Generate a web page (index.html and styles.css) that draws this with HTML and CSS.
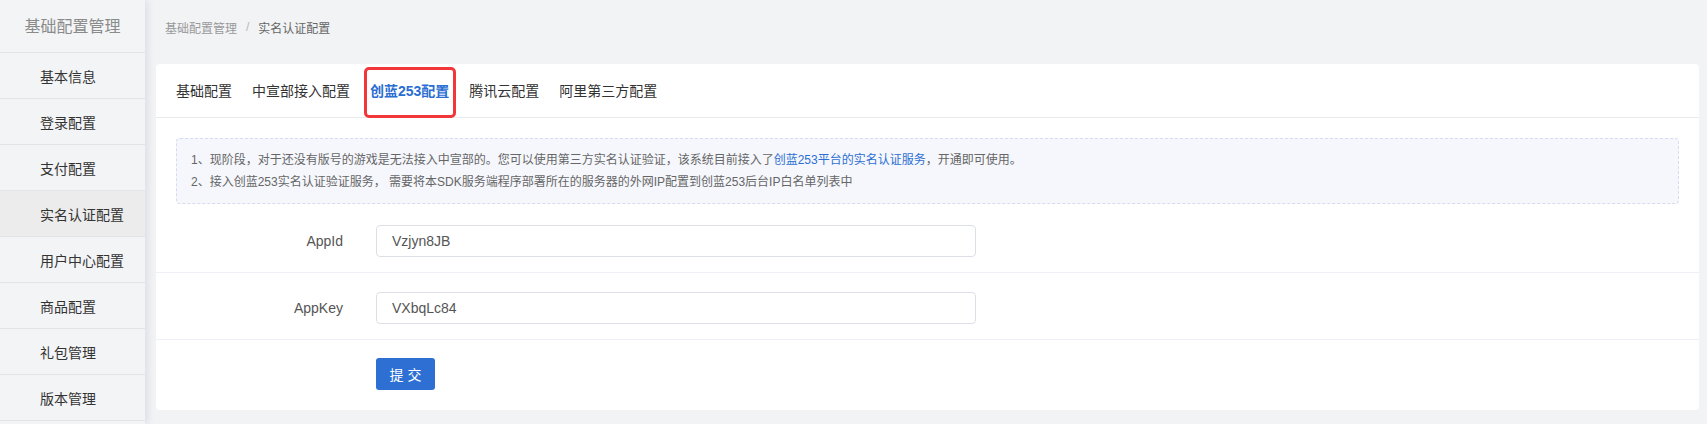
FILE: index.html
```html
<!DOCTYPE html>
<html lang="zh-CN">
<head>
<meta charset="utf-8">
<title>实名认证配置</title>
<link rel="stylesheet" href="styles.css">
</head>
<body>
<div class="layout">
  <aside class="sidebar">
    <div class="side-title">基础配置管理</div>
    <div class="side-item">基本信息</div>
    <div class="side-item">登录配置</div>
    <div class="side-item">支付配置</div>
    <div class="side-item active">实名认证配置</div>
    <div class="side-item">用户中心配置</div>
    <div class="side-item">商品配置</div>
    <div class="side-item">礼包管理</div>
    <div class="side-item">版本管理</div>
  </aside>
  <main class="main">
    <div class="breadcrumb">
      <span class="crumb">基础配置管理</span>
      <span class="sep">/</span>
      <span class="crumb current">实名认证配置</span>
    </div>
    <section class="card">
      <nav class="tabs">
        <span class="tab">基础配置</span>
        <span class="tab">中宣部接入配置</span>
        <span class="tab active">创蓝253配置</span>
        <span class="tab">腾讯云配置</span>
        <span class="tab">阿里第三方配置</span>
      </nav>
      <div class="notice">
        <p>1、现阶段，对于还没有版号的游戏是无法接入中宣部的。您可以使用第三方实名认证验证，该系统目前接入了<a class="link">创蓝253平台的实名认证服务</a>，开通即可使用。</p>
        <p>2、接入创蓝253实名认证验证服务， 需要将本SDK服务端程序部署所在的服务器的外网IP配置到创蓝253后台IP白名单列表中</p>
      </div>
      <div class="form-row first">
        <label class="label">AppId</label>
        <div class="input">Vzjyn8JB</div>
      </div>
      <div class="form-row">
        <label class="label">AppKey</label>
        <div class="input">VXbqLc84</div>
      </div>
      <div class="submit-row">
        <button class="btn">提 交</button>
      </div>
    </section>
  </main>
</div>
</body>
</html>
```

FILE: styles.css
```css
* { box-sizing: border-box; }
html, body {
  margin: 0;
  padding: 0;
  height: 100%;
  background: #f2f3f5;
  font-family: "Liberation Sans", "Noto Sans CJK SC", sans-serif;
  overflow: hidden;
}
.layout {
  display: flex;
  height: 424px;
}
.sidebar {
  width: 145px;
  flex: none;
  background: #f3f4f6;
  box-shadow: 3px 0 7px rgba(40, 60, 120, 0.10);
  position: relative;
  z-index: 1;
}
.side-title {
  height: 53px;
  border-bottom: 1px solid #e3e4e7;
  display: flex;
  align-items: center;
  justify-content: center;
  font-size: 16px;
  color: #8a8a8a;
  padding-bottom: 2px;
}
.side-item {
  height: 46px;
  border-bottom: 1px solid #e3e4e7;
  display: flex;
  align-items: center;
  padding-left: 40px;
  font-size: 14px;
  color: #333;
}
.side-item.active {
  background: #ececec;
}
.main {
  flex: 1;
  padding: 0 8px 0 11px;
  display: flex;
  flex-direction: column;
}
.breadcrumb {
  height: 64px;
  padding: 0 0 10px 9px;
  display: flex;
  align-items: center;
  font-size: 12px;
  color: #999;
}
.sep {
  margin: 0 9px;
  color: #b5b9c0;
}
.crumb.current {
  color: #666;
}
.card {
  background: #fff;
  border-radius: 4px;
  height: 346px;
}
.tabs {
  height: 54px;
  border-bottom: 1px solid #e8eaee;
  display: flex;
  gap: 20px;
  padding-left: 20px;
}
.tab {
  display: flex;
  align-items: center;
  font-size: 14px;
  color: #333;
  padding-bottom: 2px;
}
.tab.active {
  color: #2a6dd3;
  font-weight: bold;
  position: relative;
}
.tab.active::after {
  content: "";
  position: absolute;
  left: -6px;
  right: -7px;
  top: 3px;
  bottom: -1px;
  border: 3px solid #f2373b;
  border-radius: 5px;
}
.notice {
  margin: 20px 20px 2px;
  padding: 10px 14px;
  border: 1px dashed #d6dcef;
  border-radius: 4px;
  background: #f5f7fc;
  font-size: 12px;
  line-height: 22px;
  color: #666;
}
.notice p {
  margin: 0;
}
.link {
  color: #2d6fd2;
}
.form-row {
  display: flex;
  align-items: center;
  padding: 19px 0 15px;
  border-bottom: 1px solid #eef0f5;
}
.label {
  width: 187px;
  text-align: right;
  font-size: 14px;
  color: #555;
  margin-right: 33px;
}
.input {
  width: 600px;
  height: 32px;
  border: 1px solid #dcdfe6;
  border-radius: 4px;
  padding: 0 15px;
  display: flex;
  align-items: center;
  font-size: 14px;
  color: #555;
}
.submit-row {
  padding: 18px 0 0 220px;
}
.btn {
  width: 59px;
  height: 32px;
  border: none;
  border-radius: 3px;
  background: #2d6fd2;
  color: #fff;
  font-family: "Liberation Sans", "Noto Sans CJK SC", sans-serif;
  font-size: 14px;
  padding: 0;
}
```
